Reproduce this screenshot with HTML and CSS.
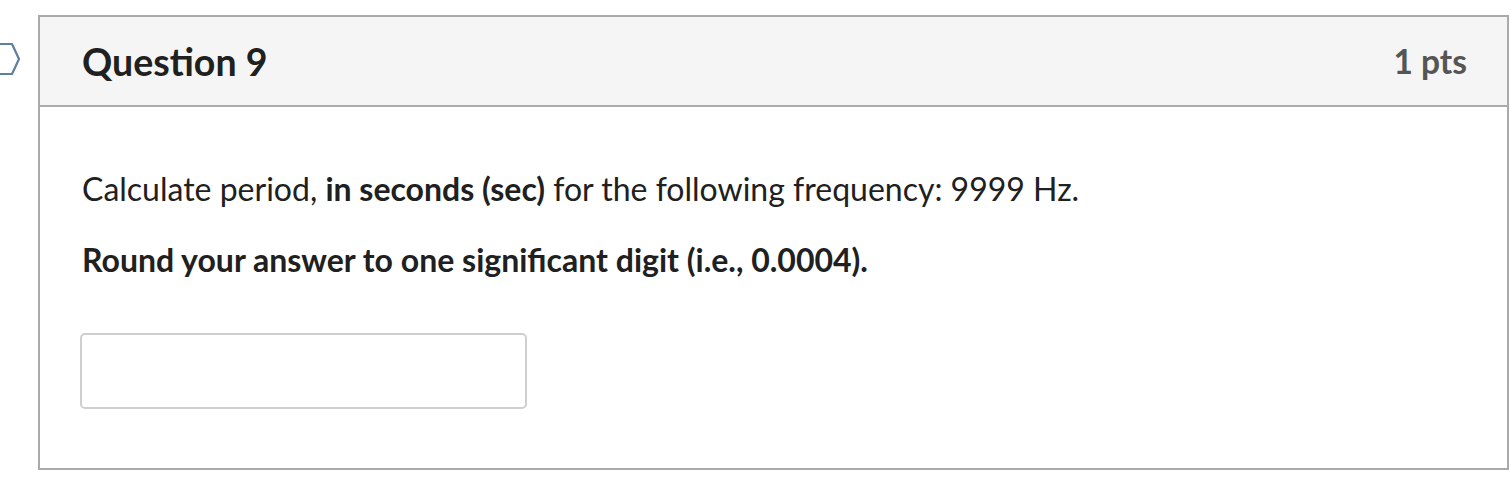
FILE: index.html
```html
<!DOCTYPE html>
<html>
<head>
<meta charset="utf-8">
<link rel="stylesheet" href="styles.css">
</head>
<body>
<div class="page">
  <svg class="flag" width="24" height="34" viewBox="0 0 24 34"><path d="M-6 2 H12 L19 17 L12 32 H-6" fill="none" stroke="#5f7f9f" stroke-width="2.2" stroke-linejoin="round"/></svg>
  <div class="card">
    <div class="header">
      <span class="title">Question 9</span>
      <span class="pts">1 pts</span>
    </div>
    <div class="body">
      <p class="line1">Calculate period, <strong>in seconds (sec)</strong> for the following frequency: 9999 Hz.</p>
      <p class="line2"><strong>Round your answer to one significant digit (i.e., 0.0004).</strong></p>
      <input class="answer" type="text">
    </div>
  </div>
</div>
</body>
</html>
```
FILE: styles.css
```css
html, body { margin: 0; padding: 0; background: #fff; }
body { font-family: Lato, "Liberation Sans", sans-serif; color: #202020; }
.page { position: relative; padding: 15px 1px 0 38px; }
.flag { position: absolute; left: 0; top: 42px; }
.card { border: 2px solid #aaaaaa; height: 455px; box-sizing: border-box; }
.header { height: 90px; background: #f5f5f5; border-bottom: 2px solid #aaaaaa; display: flex; align-items: center; justify-content: space-between; padding: 0 40px 0 42px; box-sizing: border-box; }
.title { font-size: 37.5px; font-weight: 700; color: #202020; }
.pts { font-size: 33.5px; font-weight: 700; color: #555; }
.body { padding: 63px 42px 0 42px; }
.body p { margin: 0; font-size: 32px; line-height: 38px; color: #202020; }
.line2 { margin-top: 33px !important; }
.answer { display: block; margin-top: 54px; margin-left: -2px; width: 447px; height: 76px; box-sizing: border-box; border: 2px solid #cfcfcf; border-radius: 5px; background: #fff; }
```
